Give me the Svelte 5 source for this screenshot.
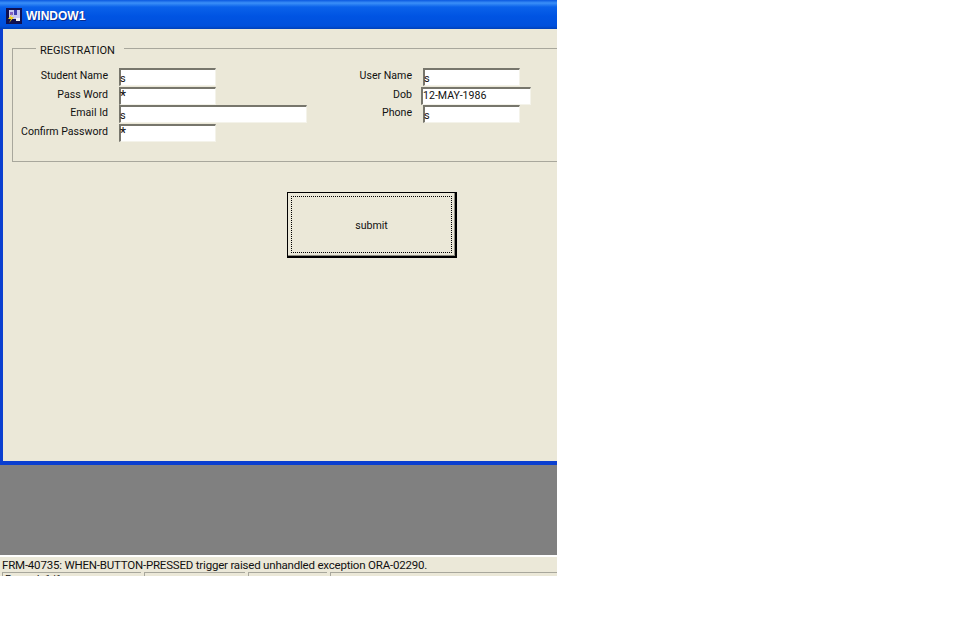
<script>
  const leftFields = [
    { label: 'Student Name', value: 's' },
    { label: 'Pass Word', value: '*', mask: true },
    { label: 'Email Id', value: 's', wide: true },
    { label: 'Confirm Password', value: '*', mask: true }
  ];
  const rightFields = [
    { label: 'User Name', value: 's' },
    { label: 'Dob', value: '12-MAY-1986', date: true },
    { label: 'Phone', value: 's' }
  ];
</script>

<div class="screen">
  <div class="window">
    <div class="titlebar">
      <svg class="app-icon" width="16" height="16" viewBox="0 0 16 16">
        <rect width="16" height="16" fill="#101050" />
        <rect x="3" y="2" width="11" height="9" fill="#c8c8f0" />
        <rect x="8" y="2" width="3" height="5" fill="#4040b0" />
        <rect x="4" y="4" width="3" height="3" fill="#8060c0" />
        <path d="M6 6 L2 11 L5 11 L3 15 L8 9 L5 9 Z" fill="#f0d020" />
        <rect x="10" y="10" width="4" height="3" fill="#f4f4f4" />
      </svg>
      <span class="title">WINDOW1</span>
    </div>
    <div class="body">
      <fieldset class="group">
        <legend>REGISTRATION</legend>
        <div class="columns">
          <div class="column left">
            {#each leftFields as f}
              <div class="row">
                <span class="label">{f.label}</span>
                <span class="input" class:wide={f.wide} class:mask={f.mask}>{f.value}</span>
              </div>
            {/each}
          </div>
          <div class="column right">
            {#each rightFields as f}
              <div class="row">
                <span class="label">{f.label}</span>
                <span class="input" class:date={f.date}>{f.value}</span>
              </div>
            {/each}
          </div>
        </div>
      </fieldset>
      <button class="submit"><span class="focus">submit</span></button>
    </div>
  </div>
  <div class="desktop"></div>
  <div class="message">FRM-40735: WHEN-BUTTON-PRESSED trigger raised unhandled exception ORA-02290.</div>
  <div class="status">
    <span class="cell first">Record: 1/1</span>
    <span class="cell second"></span>
    <span class="cell third"></span>
    <span class="cell rest"></span>
  </div>
</div>

<style>
  :global(body) {
    background: #fff;
  }

  .screen {
    width: 557px;
    height: 576px;
    overflow: hidden;
    font-family: Roboto, "Liberation Sans", Arial, sans-serif;
    font-size: 10.6px;
    color: #111;
  }

  .window {
    height: 465px;
    box-sizing: border-box;
    background: #0a3fd0;
    display: flex;
    flex-direction: column;
    padding: 0 0 4px 3px;
  }

  .titlebar {
    height: 29px;
    flex: none;
    margin-left: -3px;
    display: flex;
    align-items: center;
    gap: 4px;
    padding: 2px 0 0 6px;
    box-sizing: border-box;
    background: linear-gradient(#0a58e0 0, #3b90f8 3px, #0a62ea 7px, #0054e3 16px, #0050dc 26px, #0040b8 29px);
  }

  .app-icon {
    flex: none;
  }

  .title {
    color: #fff;
    font-weight: bold;
    font-family: "Liberation Sans", Arial, sans-serif;
    font-size: 12px;
    text-shadow: 1px 1px 0 #0a2c90;
  }

  .body {
    flex: 1;
    background: #ebe8d8;
    padding: 11px 0 0 9px;
    overflow: hidden;
  }

  .group {
    width: 700px;
    height: 122px;
    box-sizing: border-box;
    margin: 0;
    padding: 0;
    border: 1px solid #a8a79c;
    border-radius: 0;
  }

  legend {
    margin-left: 23px;
    padding: 4px 9px 0 4px;
    font-size: 11px;
    line-height: 13px;
  }

  .columns {
    display: flex;
    padding-top: 11px;
  }

  .column {
    display: flex;
    flex-direction: column;
  }

  .left {
    width: 320px;
  }

  .row {
    display: flex;
    height: 18.5px;
    align-items: flex-start;
  }

  .label {
    text-align: right;
    white-space: nowrap;
    line-height: 13px;
    padding-top: 1px;
  }

  .left .label {
    width: 95px;
    margin-right: 11px;
  }

  .right .label {
    width: 79px;
    margin-right: 11px;
  }

  .input {
    width: 97px;
    height: 18px;
    box-sizing: border-box;
    background: #fff;
    border-top: 2px solid #77766c;
    border-left: 2px solid #77766c;
    border-right: 1px solid #f4f3ea;
    border-bottom: 1px solid #f4f3ea;
    line-height: 17px;
    text-indent: -1px;
    font-size: 11px;
  }

  .mask {
    font-size: 14px;
    line-height: 14px;
  }

  .wide {
    width: 188px;
  }

  .date {
    width: 110px;
    margin-left: -2px;
    line-height: 14px;
    font-size: 10.6px;
    text-indent: 0;
  }

  .submit {
    display: block;
    margin: 30px 0 0 275px;
    width: 170px;
    height: 66px;
    padding: 3px;
    box-sizing: border-box;
    background: #ebe8d8;
    border: 1px solid #000;
    border-right: 2px solid #000;
    border-bottom: 2px solid #000;
    box-shadow: inset -1px -1px 0 #8d8b80;
    font: inherit;
    color: #111;
  }

  .focus {
    display: flex;
    align-items: center;
    justify-content: center;
    height: 100%;
    box-sizing: border-box;
    padding-top: 1px;
    border: 1px dotted #000;
  }

  .desktop {
    height: 90px;
    background: #808080;
  }

  .message {
    margin-top: 2px;
    height: 15px;
    box-sizing: border-box;
    padding: 1px 0 0 2px;
    background: #ebe8d8;
    font-size: 11.5px;
    letter-spacing: -0.2px;
    line-height: 14px;
    white-space: nowrap;
  }

  .status {
    display: flex;
    height: 4px;
    overflow: hidden;
    background: #ebe8d8;
    gap: 3px;
    padding-left: 2px;
  }

  .cell {
    box-sizing: border-box;
    height: 20px;
    border-top: 1px solid #a8a79c;
    border-left: 1px solid #a8a79c;
    font-size: 11px;
    line-height: 13px;
    padding-left: 2px;
  }

  .first { width: 139px; }
  .second { width: 101px; }
  .third { width: 79px; }
  .rest { flex: 1; }
</style>
